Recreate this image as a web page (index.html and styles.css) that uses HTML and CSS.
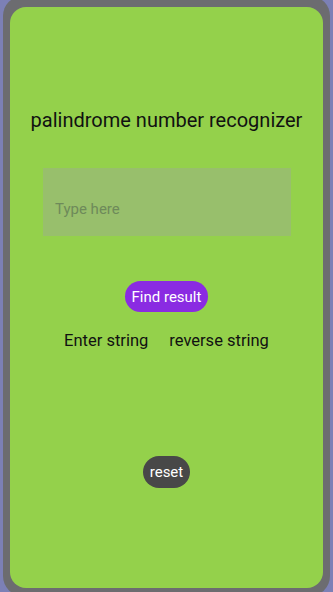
FILE: index.html
```html
<!DOCTYPE html>
<html>
<head>
<meta charset="utf-8">
<link rel="stylesheet" href="styles.css">
</head>
<body>
<div class="frame">
  <div class="screen">
    <h1 class="title">palindrome number recognizer</h1>
    <div class="input-box"><span class="placeholder">Type here</span></div>
    <button class="find-btn">Find result</button>
    <div class="labels">
      <span>Enter string</span>
      <span>reverse string</span>
    </div>
    <button class="reset-btn">reset</button>
  </div>
</div>
</body>
</html>
```
FILE: styles.css
```css
html, body {
  margin: 0;
  padding: 0;
  width: 333px;
  height: 592px;
  overflow: hidden;
  background: #7c80b6;
  font-family: Roboto, "Noto Sans", sans-serif;
}
.frame {
  box-sizing: border-box;
  margin: -4px 3px 0 3px;
  height: 600px;
  background: #6c6c70;
  border-radius: 20px;
  padding: 11px 7px 0 7px;
}
.screen {
  height: 581px;
  background: #94d14b;
  border-radius: 16px;
  display: flex;
  flex-direction: column;
  align-items: center;
}
.title {
  margin: 100px 0 0 0;
  font-size: 20px;
  font-weight: 400;
  color: #111;
  line-height: 26px;
}
.input-box {
  box-sizing: border-box;
  margin-top: 35px;
  width: 248px;
  height: 68px;
  background: #98bf6c;
  display: flex;
  align-items: center;
  padding: 14px 0 0 12px;
  align-self: flex-start;
  margin-left: 33px;
}
.placeholder {
  font-size: 15px;
  color: #6e8a5a;
}
.find-btn {
  margin-top: 45px;
  height: 31px;
  padding: 0 7px;
  border: none;
  border-radius: 16px;
  background: #8a2be2;
  color: #fff;
  font-family: inherit;
  font-size: 15px;
}
.labels {
  margin-top: 18px;
  display: flex;
  gap: 21px;
  font-size: 16.5px;
  color: #111;
  line-height: 22px;
}
.reset-btn {
  margin-top: 104px;
  height: 32px;
  padding: 0 7px;
  border: none;
  border-radius: 16px;
  background: #484848;
  color: #fff;
  font-family: inherit;
  font-size: 15px;
}
```
